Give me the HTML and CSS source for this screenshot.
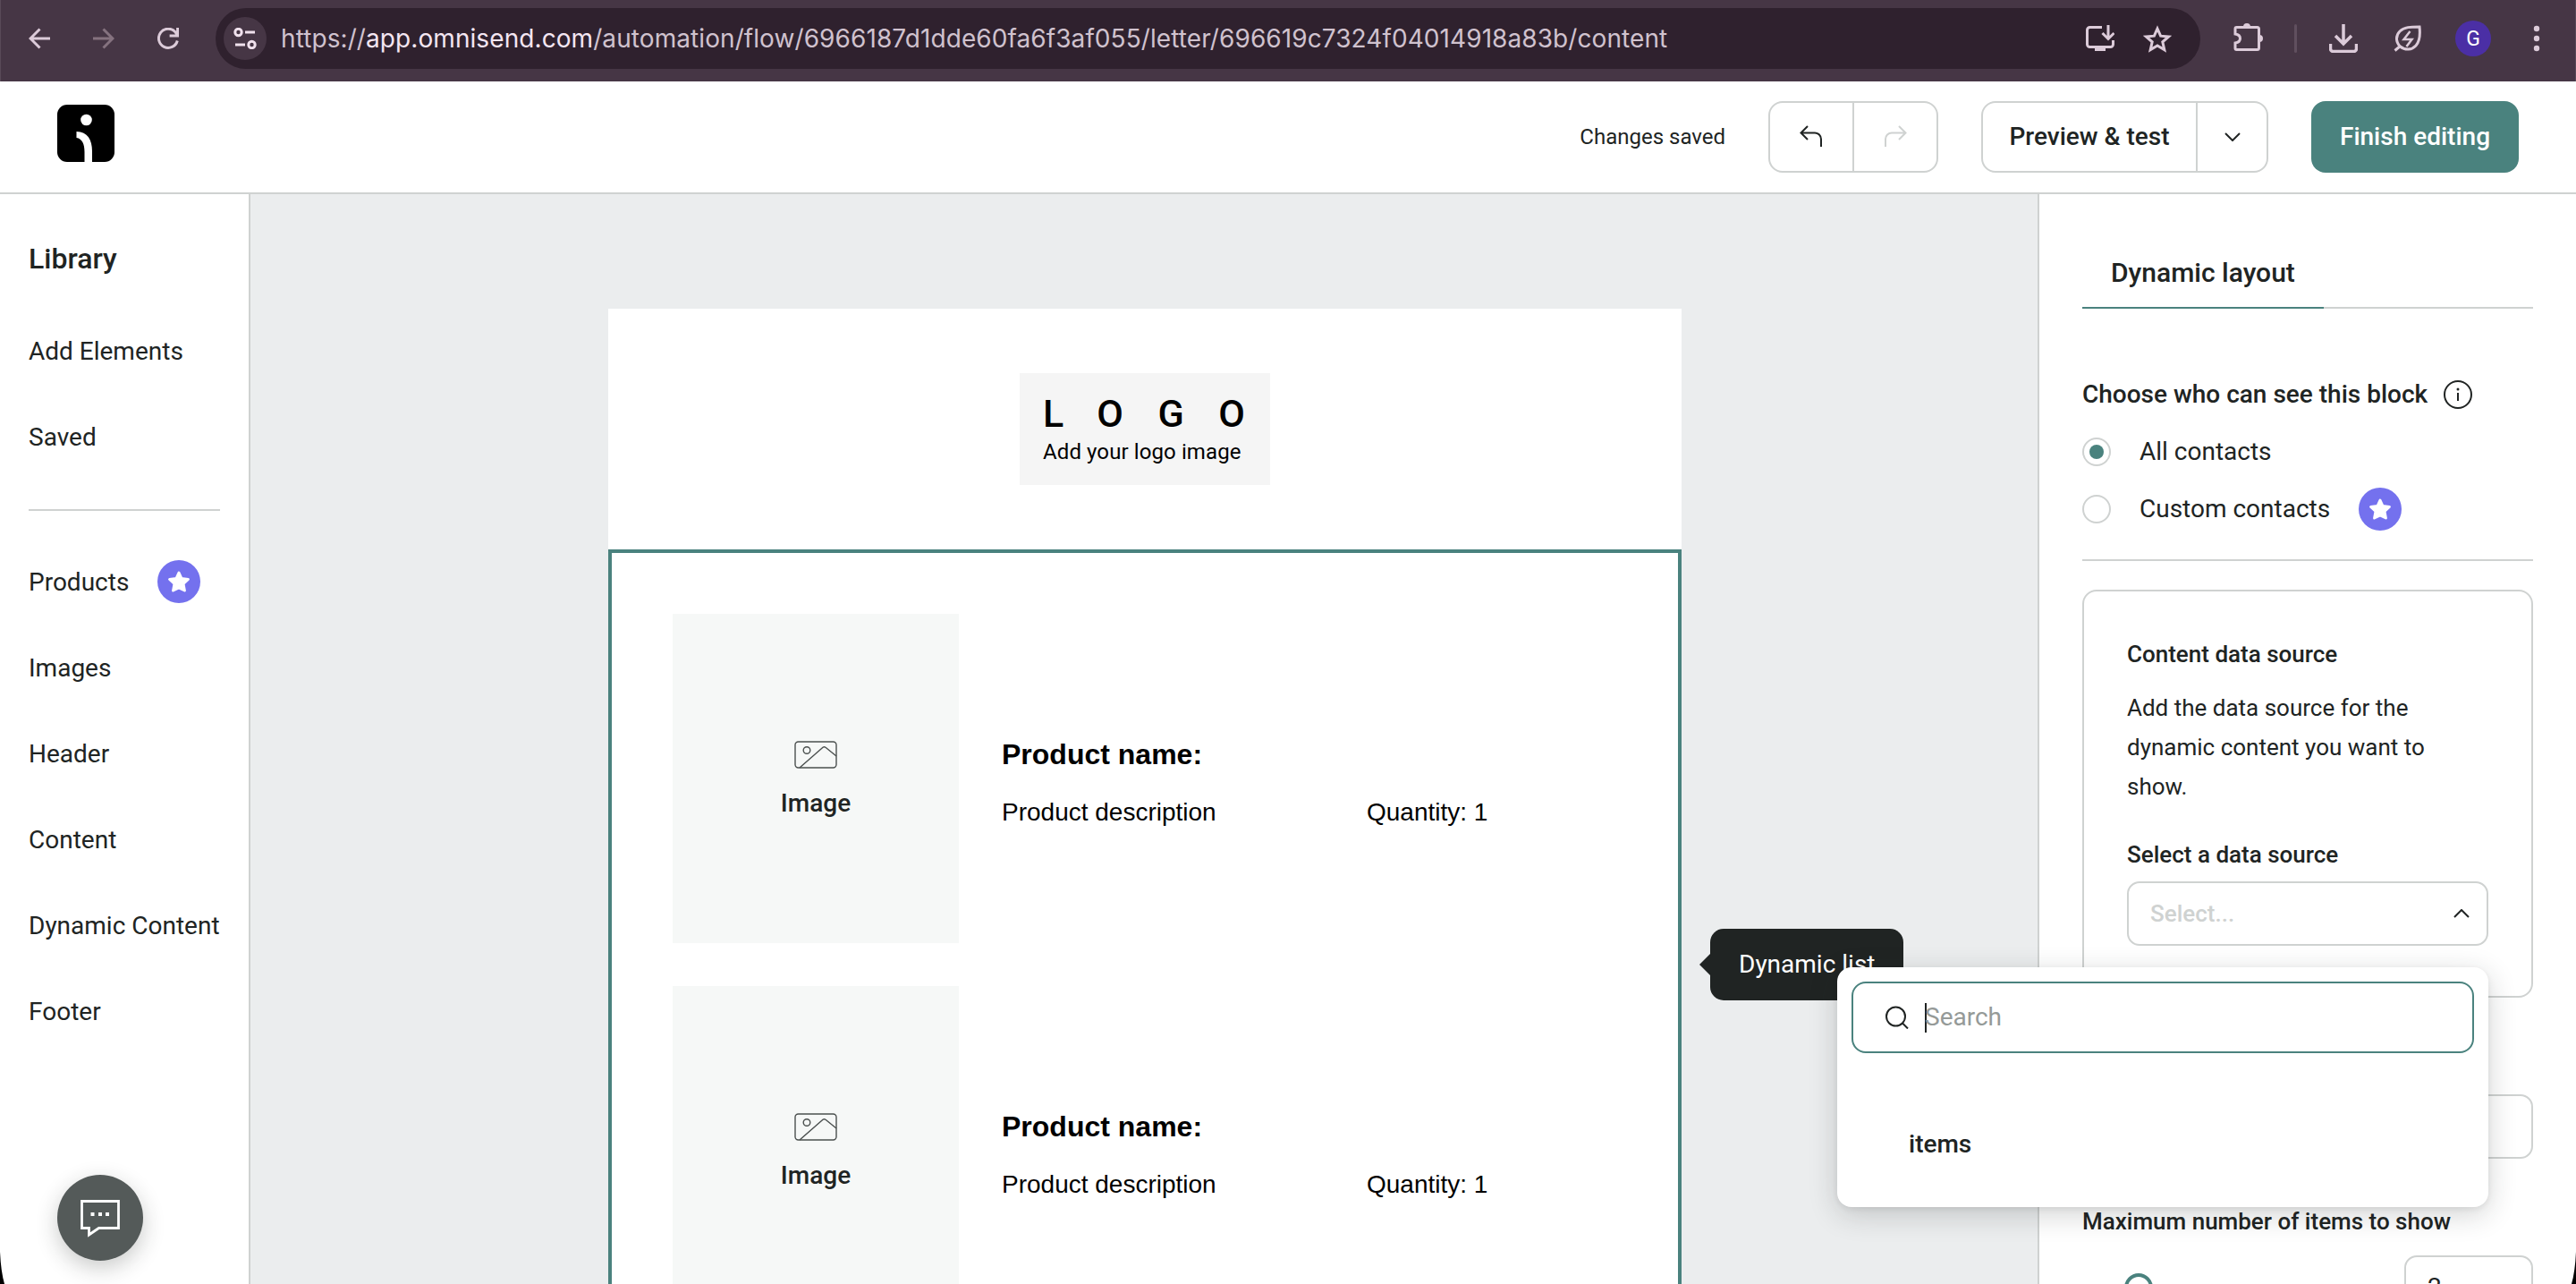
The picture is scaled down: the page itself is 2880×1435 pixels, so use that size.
FILE: index.html
```html
<!DOCTYPE html>
<html lang="en">
<head>
<meta charset="utf-8">
<title>Omnisend – Email editor</title>
<link rel="stylesheet" href="styles.css">
</head>
<body>
<svg class="defs" width="0" height="0" aria-hidden="true">
  <symbol id="star-badge" viewBox="0 0 48 48">
    <circle cx="24" cy="24" r="24" fill="#7471ee"/>
    <path d="M24 14 L27 20.6 L34.4 21.4 L29 26.4 L30.4 34 L24 31 L17.6 34 L19 26.4 L13.6 21.4 L21 20.6 Z" fill="#fff" stroke="#fff" stroke-width="3" stroke-linejoin="round"/>
  </symbol>
  <symbol id="picture" viewBox="0 0 48 32">
    <g fill="none" stroke="#4b504f" stroke-width="1.4">
      <rect x="1" y="1" width="46" height="29" rx="3.5"/>
      <circle cx="14" cy="10.5" r="3.8"/>
      <path d="M6 30 L32 7.3 Q33.5 6 35 7.3 L47 17"/>
    </g>
  </symbol>
</svg>

<div class="window">
  <div class="browser-bar">
    <svg class="nav-icon" width="24" height="24" viewBox="0 0 24 24"><path d="M24 12H2M12.5 1.5L2 12l10.5 10.5"/></svg>
    <svg class="nav-icon dim" width="24" height="24" viewBox="0 0 24 24"><path d="M0 12h22M11.500 1.500L22 12 11.500 22.500"/></svg>
    <svg class="nav-icon" width="24" height="24" viewBox="0 0 24 24"><path d="M22.300 14.500A10.600 10.600 0 1 1 20 4.800L22 8M22.600 0v9h-9"/></svg>
    <div class="address">
      <span class="site-info">
        <svg width="26" height="24" viewBox="0 0 26 24" fill="none" stroke="#f0e1ed" stroke-width="3"><circle cx="5.500" cy="5" r="3.700"/><path d="M13 5h11M2 19h11"/><circle cx="20.500" cy="19" r="3.700"/></svg>
      </span>
      <span class="url">https://<b>app.omnisend.com</b>/automation/flow/6966187d1dde60fa6f3af055/letter/696619c7324f04014918a83b/content</span>
      <svg class="bar-icon" width="32" height="30" viewBox="0 0 32 30"><path d="M18 2.500H4.500a3 3 0 0 0-3 3v16a3 3 0 0 0 3 3h23a3 3 0 0 0 3-3V17M25 0v15M18.500 9l6.500 6.500L31.500 9"/><path d="M10 24.500h12V29H10z" class="fill"/></svg>
      <svg class="bar-icon star" width="32" height="31" viewBox="0 0 32 31"><path d="M16 4l3.600 8.200 8.900.8-6.700 5.900 2 8.700L16 23l-7.800 4.600 2-8.700L3.500 13l8.900-.8z"/></svg>
    </div>
    <svg class="bar-icon puzzle" width="34" height="34" viewBox="0 0 34 34"><path d="M3.500 6.500h23a2 2 0 0 1 2 2v21a2 2 0 0 1-2 2h-23a1.500 1.500 0 0 1-1.500-1.500v-6c3.600-.5 5.500-2.400 5.500-5s-1.900-4.500-5.500-5V8a1.500 1.500 0 0 1 1.500-1.500z"/><path class="fill" d="M11 6a4 4 0 0 1 8 0zM29 15a4 4 0 0 1 0 8z"/></svg>
    <span class="separator"></span>
    <svg class="bar-icon download" width="32" height="32" viewBox="0 0 32 32"><path d="M16 0v21M7 13l9 9 9-9M1.500 22v5.500a3 3 0 0 0 3 3h23a3 3 0 0 0 3-3V22" stroke-width="3.500"/></svg>
    <svg class="bar-icon leaf" width="32" height="30" viewBox="0 0 32 30"><path d="M29 2c1 9 .5 16-4 21-4.500 5-12 5.500-17.500 1C2 18.500 2.500 11.500 7 7 12 2 19 2 29 2zM1.500 28.500l6-5"/><path d="M18.500 7l-7 9h9l-6 8" stroke-width="2.500"/></svg>
    <span class="avatar">G</span>
    <svg class="more" width="8" height="30" viewBox="0 0 8 30"><circle cx="4" cy="4" r="3.200"/><circle cx="4" cy="15" r="3.200"/><circle cx="4" cy="26" r="3.200"/></svg>
  </div>

  <header class="topbar">
    <svg class="brand" width="64" height="64" viewBox="0 0 64 64"><rect width="64" height="64" rx="11"/><circle cx="32.500" cy="17" r="6.300" fill="#fff"/><path fill="#fff" d="M21.500 30C34 30.500 39 39 39 52v12h-8.500V53c0-9-2.500-15-9-16z"/></svg>
    <span class="save-state">Changes saved</span>
    <div class="btn-group history">
      <button class="seg"><svg width="26" height="26" viewBox="0 0 26 26"><path d="M9 1L1.500 8.500 9 16M1.500 8.500H17a7 7 0 0 1 7 7V24"/></svg></button>
      <button class="seg off"><svg width="26" height="26" viewBox="0 0 26 26"><path d="M17 1l7.500 7.500L17 16M24.500 8.500H9a7 7 0 0 0-7 7V24"/></svg></button>
    </div>
    <div class="btn-group preview">
      <button class="seg label">Preview &amp; test</button>
      <button class="seg caret"><svg width="18" height="10" viewBox="0 0 18 10"><path d="M1 1l8 8 8-8"/></svg></button>
    </div>
    <button class="finish">Finish editing</button>
  </header>

  <div class="workspace">
    <nav class="library">
      <h2>Library</h2>
      <a>Add Elements</a>
      <a>Saved</a>
      <hr>
      <a>Products <svg width="48" height="48"><use href="#star-badge"/></svg></a>
      <a>Images</a>
      <a>Header</a>
      <a>Content</a>
      <a>Dynamic Content</a>
      <a>Footer</a>
    </nav>

    <main class="canvas">
      <div class="email">
        <section class="email-head">
          <div class="logo-box"><strong>LOGO</strong><span>Add your logo image</span></div>
        </section>
        <section class="dynamic-list">
          <article class="product">
            <div class="image-slot"><svg width="48" height="32"><use href="#picture"/></svg><span>Image</span></div>
            <div class="details">
              <h3>Product name:</h3>
              <p><span>Product description</span><span>Quantity: 1</span></p>
            </div>
          </article>
          <article class="product">
            <div class="image-slot"><svg width="48" height="32"><use href="#picture"/></svg><span>Image</span></div>
            <div class="details">
              <h3>Product name:</h3>
              <p><span>Product description</span><span>Quantity: 1</span></p>
            </div>
          </article>
        </section>
      </div>
    </main>

    <aside class="settings">
      <div class="tabs"><span class="tab">Dynamic layout</span></div>
      <div class="audience-title">Choose who can see this block
        <svg width="34" height="34" viewBox="0 0 34 34"><circle cx="17" cy="17" r="15" fill="none" stroke="#202423" stroke-width="2"/><path d="M17 15v9" stroke="#202423" stroke-width="2"/><circle cx="17" cy="11" r="1.500" fill="#202423"/></svg>
      </div>
      <div class="radio-row"><span class="radio on"></span><span class="radio-text">All contacts</span></div>
      <div class="radio-row"><span class="radio"></span><span class="radio-text">Custom contacts</span> <svg width="48" height="48"><use href="#star-badge"/></svg></div>
      <hr>
      <div class="card">
        <h4>Content data source</h4>
        <p>Add the data source for the dynamic content you want to show.</p>
        <h4 class="field-label">Select a data source</h4>
        <div class="select">Select... <svg width="18" height="10" viewBox="0 0 18 10"><path d="M1 9l8-8 8 8"/></svg></div>
      </div>
      <div class="field"></div>
      <h4 class="max-label">Maximum number of items to show</h4>
      <div class="range-row"><span class="thumb"></span><span class="number">2</span></div>
    </aside>
  </div>

  <div class="tooltip">Dynamic list</div>
  <div class="dropdown">
    <div class="search">
      <svg width="26" height="26" viewBox="0 0 26 26"><circle cx="11.500" cy="12" r="10.500"/><path d="M19 19.500l6 6"/></svg>
      <span class="cursor"></span><span class="placeholder">Search</span>
    </div>
    <div class="option">items</div>
  </div>
  <div class="chat">
    <svg width="46" height="44" viewBox="0 0 46 44"><path d="M2.500 3.500h41v30H21.500L10.500 41v-7.500h-8z" fill="none" stroke="#fff" stroke-width="2.800"/><path d="M12.500 16h4v4h-4zM21 16h4v4h-4zM29 16h4v4h-4z" fill="#fff"/></svg>
  </div>
  <svg class="corner left" width="6" height="36" viewBox="0 0 6 36"><path d="M0 0Q1 22 5 36H0z"/></svg>
  <svg class="corner right" width="6" height="36" viewBox="0 0 6 36"><path d="M6 0Q5 22 1 36h5z"/></svg>
</div>
</body>
</html>
```
FILE: styles.css
```css
* { box-sizing: border-box; margin: 0; padding: 0; }
body { font-family: Roboto, "Liberation Sans", sans-serif; font-size: 28px; color: #202423; background: #fff; overflow: hidden; }
button { font: inherit; color: inherit; background: none; border: 0; }
svg { flex: none; display: block; }
.defs { position: absolute; }
.window { position: relative; width: 2880px; height: 1435px; overflow: hidden; display: flex; flex-direction: column; }

/* Browser chrome */
.browser-bar { flex: none; height: 91px; padding: 0 39px 5px 31px; display: flex; align-items: center; background: #463645; border: solid #594a58; border-width: 0 1px; }
.nav-icon { fill: none; stroke: #dccbd9; stroke-width: 3; margin-right: 48px; }
.nav-icon.dim { stroke: #85727f; }
.address { width: 2219px; height: 68px; margin-left: -7px; border-radius: 34px; background: #2f212e; display: flex; align-items: center; padding: 0 32px 0 9px; }
.site-info { width: 48px; height: 48px; border-radius: 50%; background: #463645; display: flex; align-items: center; justify-content: center; }
.url { flex: 1; margin-left: 16px; font: 28px/40px Inter, sans-serif; letter-spacing: .08px; color: #d0c2ce; white-space: nowrap; }
.url b { font-weight: 400; color: #f4e6f2; }
.bar-icon { fill: none; stroke: #dccbd9; stroke-width: 3; }
.bar-icon .fill { fill: #dccbd9; stroke: none; }
.star { margin-left: 32px; }
.puzzle { margin-left: 37px; margin-top: -4px; }
.separator { width: 3px; height: 32px; border-radius: 2px; background: #604f5e; margin-left: 34px; }
.download { margin-left: 36px; }
.leaf { margin-left: 40px; }
.avatar { width: 40px; height: 40px; margin-left: 37px; border-radius: 50%; background: #4b2fa5; color: #fff; font-size: 23px; line-height: 41px; text-align: center; }
.more { fill: #dccbd9; margin-left: auto; }

/* Editor header */
.topbar { flex: none; height: 126px; border-bottom: 2px solid #cfd2d1; padding: 0 64px; display: flex; align-items: center; gap: 48px; }
.brand { margin: 0 auto 8px 0; }
.save-state { font-size: 24px; }
.btn-group { height: 80px; border: 2px solid #cfd2d1; border-radius: 16px; display: flex; }
.history { width: 190px; }
.preview { width: 321px; }
.seg { flex: 1; display: flex; align-items: center; justify-content: center; }
.seg + .seg { border-left: 2px solid #cfd2d1; }
.seg svg, .select svg { fill: none; stroke: #202423; stroke-width: 2; }
.seg.off svg { stroke: #cfd2d1; }
.seg.label { font-weight: 500; padding-bottom: 2px; }
.seg.caret { flex: none; width: 79px; }
.finish { width: 232px; height: 80px; padding-bottom: 2px; border-radius: 16px; background: #4a827e; color: #fff; font-weight: 500; }

/* Left library */
.workspace { flex: 1; min-height: 0; display: flex; }
.library { width: 280px; border-right: 2px solid #cfd2d1; padding: 50px 32px 0; }
.library h2 { font-size: 32px; font-weight: 500; line-height: 44px; margin-bottom: 33px; }
.library a { height: 96px; display: flex; align-items: center; gap: 32px; white-space: nowrap; }
hr { border: 0; height: 2px; background: #cfd2d1; }
.library hr { margin: 33px 0 31px; }

/* Email canvas */
.canvas { width: 1998px; background: #ebedee; padding: 128px 398px 0 400px; overflow: hidden; }
.email { width: 1200px; background: #fff; }
.email-head { height: 269px; padding-top: 72px; display: flex; justify-content: center; align-items: flex-start; }
.logo-box { width: 280px; height: 125px; background: #f5f5f5; color: #000; padding: 22px 0 0 26px; }
.logo-box strong { display: block; font-size: 43px; line-height: 46px; font-weight: 500; letter-spacing: 38.5px; white-space: nowrap; }
.logo-box span { display: block; margin-top: 6px; font-size: 24px; line-height: 28px; letter-spacing: .1px; }
.dynamic-list { height: 960px; border: 4px solid #4a827e; padding: 68px; display: flex; flex-direction: column; gap: 48px; font-family: "Liberation Sans", Arial, sans-serif; color: #000; }
.product { height: 368px; display: flex; gap: 48px; }
.image-slot { width: 320px; height: 368px; flex: none; background: #f6f8f7; padding-top: 142px; display: flex; flex-direction: column; align-items: center; font: 500 28px/36px Roboto, sans-serif; color: #202423; }
.image-slot span { margin-top: 20px; }
.details { padding-top: 133px; }
.details h3 { font-size: 32px; line-height: 48px; margin-bottom: 20px; }
.details p { display: grid; grid-template-columns: 408px auto; line-height: 42px; }

/* Settings panel */
.settings { width: 602px; border-left: 2px solid #cfd2d1; padding: 68px 48px 0; overflow: hidden; }
.tabs { height: 60px; border-bottom: 2px solid #cfd2d1; display: flex; }
.tab { width: 270px; height: 60px; padding-left: 32px; border-bottom: 2px solid #4a827e; font-size: 30px; line-height: 40px; font-weight: 500; white-space: nowrap; }
.audience-title { margin-top: 80px; height: 32px; display: flex; align-items: center; gap: 17px; font-weight: 500; line-height: 36px; white-space: nowrap; margin-bottom: 16px; }
.radio-row { height: 64px; display: flex; align-items: center; }
.radio-row svg { margin-left: 32px; }
.radio { width: 32px; height: 32px; border: 2px solid #cfd2d1; border-radius: 50%; margin-right: 32px; display: flex; align-items: center; justify-content: center; }
.radio-text { padding-bottom: 1px; }
.radio.on::after { content: ""; width: 16px; height: 16px; border-radius: 50%; background: #4a827e; }
.settings hr { margin: 24px 0 32px; }
.card { height: 456px; border: 2px solid #cfd2d1; border-radius: 16px; padding: 50px 48px 0; }
.settings h4 { font-size: 26px; line-height: 40px; font-weight: 500; white-space: nowrap; }
.card p { margin-top: 18px; font-size: 26px; line-height: 44px; }
.settings .field-label { margin-top: 34px; }
.select { margin-top: 10px; height: 72px; border: 2px solid #cfd2d1; border-radius: 14px; padding: 0 19px 0 24px; display: flex; align-items: center; justify-content: space-between; font-size: 26px; font-weight: 500; color: #cfd2d1; }
.field { margin-top: 108px; height: 72px; border: 2px solid #cfd2d1; border-radius: 14px; }
.settings .max-label { margin-top: 50px; }
.range-row { margin-top: 18px; height: 72px; display: flex; align-items: center; justify-content: space-between; padding-left: 47px; }
.thumb { width: 32px; height: 32px; border: 4px solid #4a827e; border-radius: 50%; }
.number { width: 144px; height: 72px; border: 2px solid #cfd2d1; border-radius: 14px; padding-left: 24px; line-height: 68px; }

/* Floating layers */
.tooltip { position: absolute; left: 1912px; top: 1038px; width: 216px; height: 80px; border-radius: 15px; background: #202423; color: #fff; line-height: 79px; padding-left: 32px; }
.tooltip::before { content: ""; position: absolute; left: -12px; top: 28px; border: solid transparent; border-width: 12px 12px 12px 0; border-right-color: #202423; }
.dropdown { position: absolute; left: 2054px; top: 1081px; width: 728px; height: 268px; border-radius: 16px; background: #fff; padding: 16px; box-shadow: 0 8px 32px rgba(32, 36, 35, .2), 0 2px 6px rgba(32, 36, 35, .08); }
.search { height: 80px; border: 2px solid #4a827e; border-radius: 16px; display: flex; align-items: center; padding-left: 36px; }
.search svg { fill: none; stroke: #202423; stroke-width: 2; }
.cursor { width: 2px; height: 33px; margin-left: 18px; background: #202423; }
.placeholder { color: #959a98; margin-left: -2px; margin-top: -1px; }
.option { margin: 70px 0 0 64px; line-height: 64px; font-weight: 500; }
.chat { position: absolute; left: 64px; top: 1313px; width: 96px; height: 96px; border-radius: 50%; background: #545a59; display: flex; align-items: center; justify-content: center; box-shadow: 0 8px 24px rgba(32, 36, 35, .24); }
.corner { position: absolute; bottom: 0; fill: #000; }
.corner.left { left: 0; }
.corner.right { right: 0; }
```
